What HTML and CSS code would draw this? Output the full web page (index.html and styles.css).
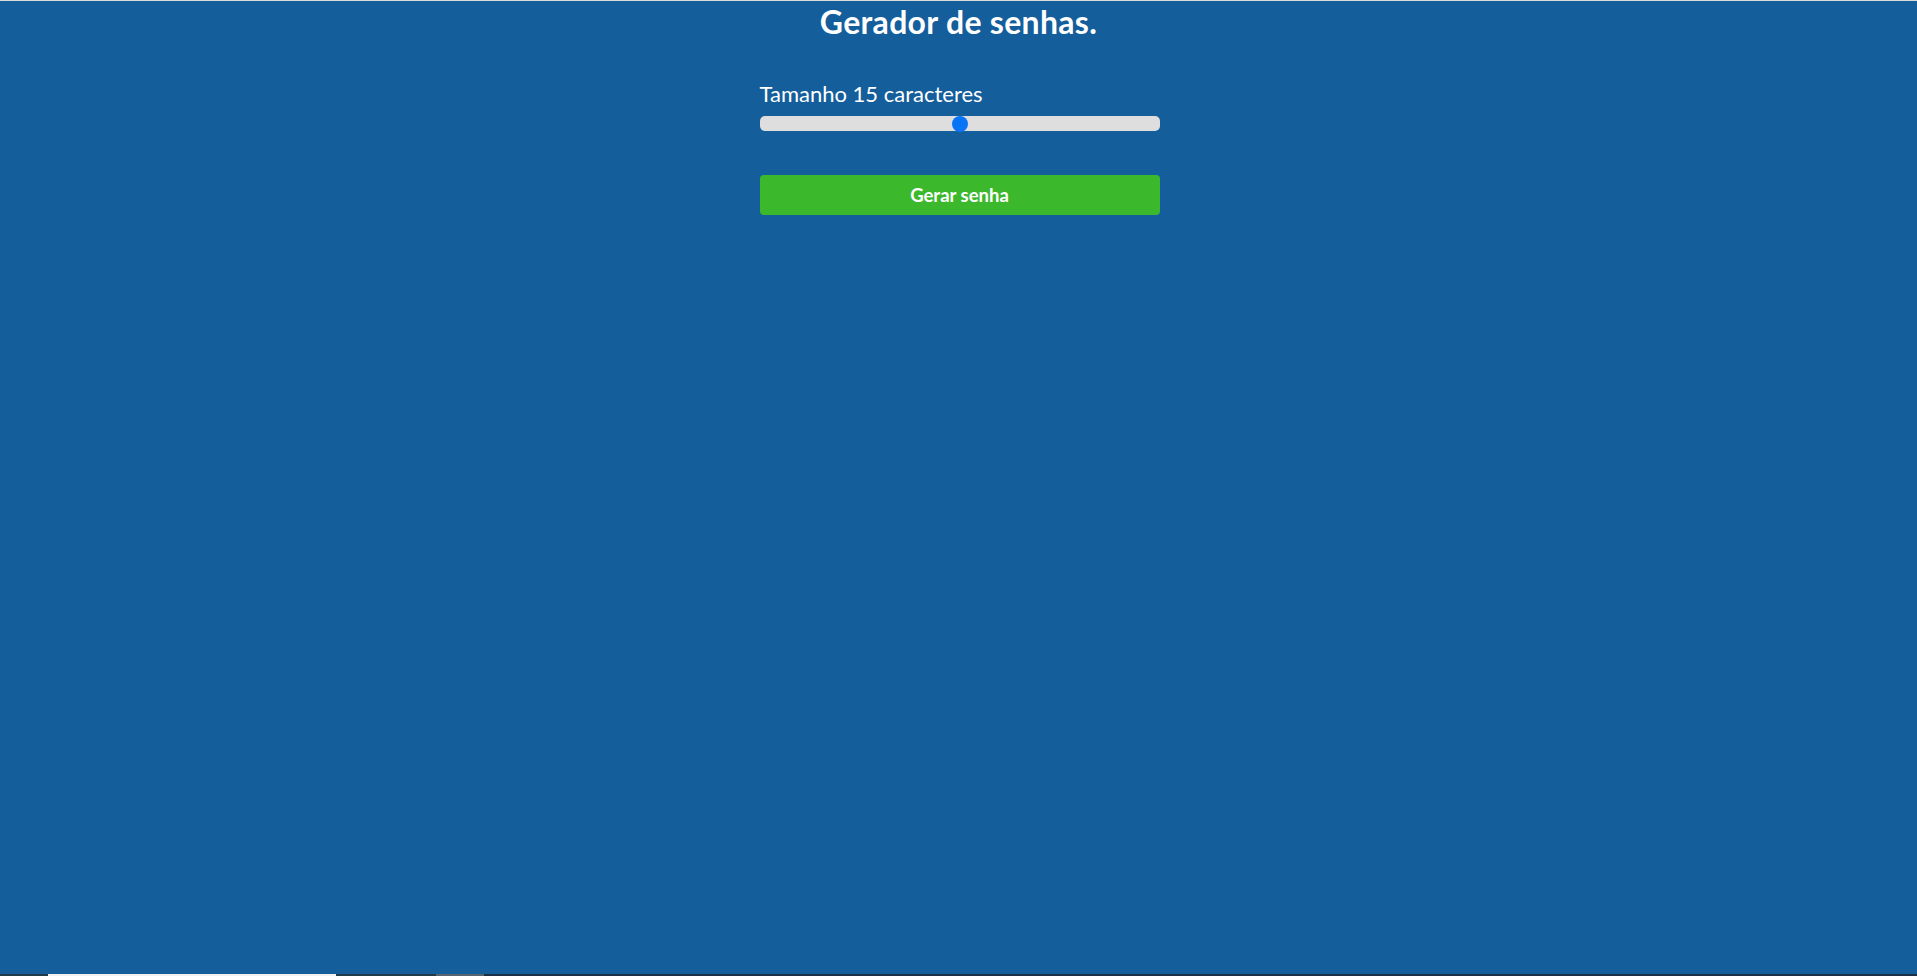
FILE: index.html
```html
<!DOCTYPE html>
<html lang="pt-BR">
<head>
<meta charset="utf-8">
<title>Gerador de senhas</title>
<link rel="stylesheet" href="styles.css">
</head>
<body>
<div class="topline"></div>
<main class="app">
  <h1 class="title">Gerador de senhas.</h1>
  <section class="panel">
    <label class="label" for="size">Tamanho <span>15</span> caracteres</label>
    <input class="slider" id="size" type="range" min="4" max="26" value="15">
    <button class="btn">Gerar senha</button>
  </section>
</main>
<div class="taskstrip">
  <span class="seg seg-dark1"></span>
  <span class="seg seg-white"></span>
  <span class="seg seg-dark2"></span>
  <span class="seg seg-gray"></span>
  <span class="seg seg-dark3"></span>
</div>
</body>
</html>
```
FILE: styles.css
```css
* { box-sizing: border-box; }
html, body { height: 100%; }
body {
  margin: 0;
  background: #145e9b;
  font-family: "Lato", "Noto Sans", sans-serif;
  color: #fff;
  overflow: hidden;
}
.topline {
  height: 1px;
  background: #dcdcdc;
}
.app {
  display: flex;
  flex-direction: column;
  align-items: center;
}
.title {
  margin: 3px 0 0;
  font-size: 32px;
  font-weight: 700;
  line-height: 36px;
  letter-spacing: 0.3px;
}
.panel {
  width: 400px;
  margin-top: 42px;
  margin-left: 2px;
  display: flex;
  flex-direction: column;
}
.label {
  font-size: 22px;
  line-height: 24px;
  font-weight: 400;
}
.slider {
  -webkit-appearance: none;
  appearance: none;
  width: 400px;
  height: 15px;
  margin: 10px 0 0;
  background: #dedede;
  border-radius: 5px;
  outline: none;
}
.slider::-webkit-slider-thumb {
  -webkit-appearance: none;
  appearance: none;
  width: 16px;
  height: 16px;
  border-radius: 50%;
  background: #0a74f7;
  border: none;
}
.btn {
  margin-top: 44px;
  height: 40px;
  border: none;
  border-radius: 4px;
  background: #3cb82d;
  color: #fff;
  font-family: "Lato", "Noto Sans", sans-serif;
  font-size: 18.5px;
  font-weight: 700;
}
.taskstrip {
  position: fixed;
  left: 0;
  right: 0;
  bottom: 0;
  height: 2px;
  display: flex;
}
.seg { height: 2px; }
.seg-dark1 { width: 48px; background: #1e3b4b; }
.seg-white { width: 288px; background: #f0f0f0; }
.seg-dark2 { width: 100px; background: #1e3b4b; }
.seg-gray { width: 48px; background: #556470; }
.seg-dark3 { flex: 1; background: #1a2f45; }
```
